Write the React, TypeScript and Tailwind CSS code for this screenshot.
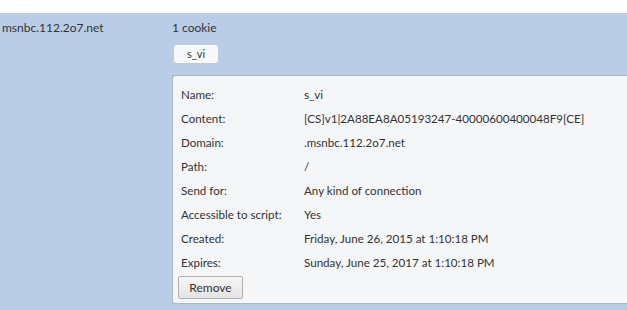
import React from 'react';

const rows: [string, string][] = [
  ['Name:', 's_vi'],
  ['Content:', '[CS]v1|2A88EA8A05193247-40000600400048F9[CE]'],
  ['Domain:', '.msnbc.112.2o7.net'],
  ['Path:', '/'],
  ['Send for:', 'Any kind of connection'],
  ['Accessible to script:', 'Yes'],
  ['Created:', 'Friday, June 26, 2015 at 1:10:18 PM'],
  ['Expires:', 'Sunday, June 25, 2017 at 1:10:18 PM'],
];

export default function App() {
  return (
    <div className="w-[627px] h-[310px] overflow-hidden bg-white text-[11.6px] text-[#333] font-['Lato','Open_Sans',sans-serif]">
      <div className="mt-[13px] h-[297px] bg-[#b9cde6] flex">
        <div className="w-[172px] shrink-0 pl-[2px] pt-[7px] leading-[16px] text-[12px]">msnbc.112.2o7.net</div>
        <div className="flex-1 min-w-0 pt-[7px]">
          <div className="leading-[16px] text-[12px]">1 cookie</div>
          <div className="mt-[8px] ml-[1px] w-[46px] h-[20px] rounded-[4px] border border-[#c3cbd6] bg-[#f7f8fa] flex items-center justify-center text-[11px]">
            s_vi
          </div>
          <div className="mt-[11px] w-[470px] h-[229px] rounded-tl-[3px] rounded-bl-[3px] border border-r-0 border-[#a9b7c9] bg-[#f5f6f8] pt-[7px] pl-[5px]">
            {rows.map(([k, v]) => (
              <div key={k} className="flex h-[24px] items-center pl-[3px] whitespace-nowrap">
                <span className="w-[123px] shrink-0">{k}</span>
                <span>{v}</span>
              </div>
            ))}
            <button className="mt-[1px] w-[65px] h-[23px] rounded-[2px] border border-[#b0b0b0] bg-gradient-to-b from-[#f6f6f6] to-[#e4e4e4] text-[12px] text-[#333]">
              Remove
            </button>
          </div>
        </div>
      </div>
    </div>
  );
}
